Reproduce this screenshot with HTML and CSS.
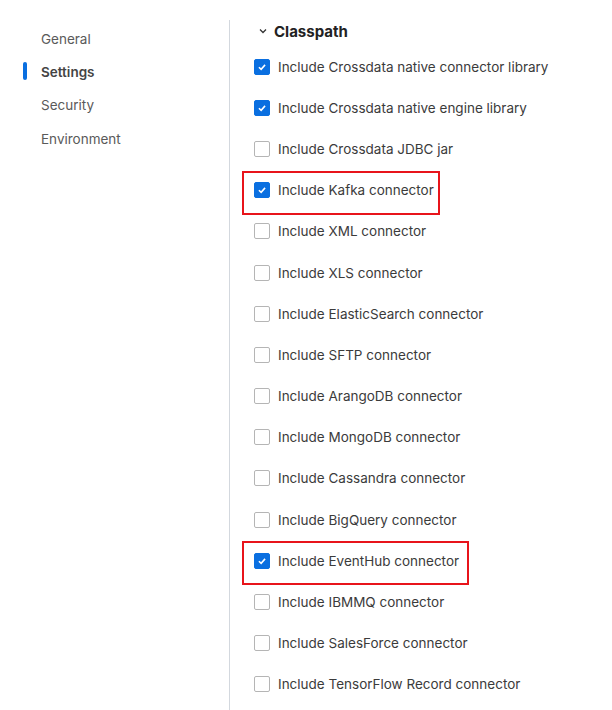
FILE: index.html
```html
<!DOCTYPE html>
<html lang="en">
<head>
<meta charset="utf-8">
<link rel="stylesheet" href="styles.css">
</head>
<body>
<div class="page">
  <nav class="sidenav">
    <div class="nav-item">General</div>
    <div class="nav-item active">Settings</div>
    <div class="nav-item">Security</div>
    <div class="nav-item">Environment</div>
  </nav>
  <main class="content">
    <div class="section-title">
      <svg class="chev" width="8" height="6" viewBox="0 0 8 6"><path d="M1 1.5 L4 4.5 L7 1.5" fill="none" stroke="#333" stroke-width="1.3"/></svg>
      <span>Classpath</span>
    </div>
    <ul class="opts">
      <li class="opt"><span class="cb on"><svg viewBox="0 0 16 16"><path d="M4.5 8.3 L7 10.6 L11.5 5.6" fill="none" stroke="#fff" stroke-width="1.8"/></svg></span>Include Crossdata native connector library</li>
      <li class="opt"><span class="cb on"><svg viewBox="0 0 16 16"><path d="M4.5 8.3 L7 10.6 L11.5 5.6" fill="none" stroke="#fff" stroke-width="1.8"/></svg></span>Include Crossdata native engine library</li>
      <li class="opt"><span class="cb"></span>Include Crossdata JDBC jar</li>
      <li class="opt"><span class="hl hl-kafka"></span><span class="cb on"><svg viewBox="0 0 16 16"><path d="M4.5 8.3 L7 10.6 L11.5 5.6" fill="none" stroke="#fff" stroke-width="1.8"/></svg></span>Include Kafka connector</li>
      <li class="opt"><span class="cb"></span>Include XML connector</li>
      <li class="opt"><span class="cb"></span>Include XLS connector</li>
      <li class="opt"><span class="cb"></span>Include ElasticSearch connector</li>
      <li class="opt"><span class="cb"></span>Include SFTP connector</li>
      <li class="opt"><span class="cb"></span>Include ArangoDB connector</li>
      <li class="opt"><span class="cb"></span>Include MongoDB connector</li>
      <li class="opt"><span class="cb"></span>Include Cassandra connector</li>
      <li class="opt"><span class="cb"></span>Include BigQuery connector</li>
      <li class="opt"><span class="hl hl-eventhub"></span><span class="cb on"><svg viewBox="0 0 16 16"><path d="M4.5 8.3 L7 10.6 L11.5 5.6" fill="none" stroke="#fff" stroke-width="1.8"/></svg></span>Include EventHub connector</li>
      <li class="opt"><span class="cb"></span>Include IBMMQ connector</li>
      <li class="opt"><span class="cb"></span>Include SalesForce connector</li>
      <li class="opt"><span class="cb"></span>Include TensorFlow Record connector</li>
    </ul>
  </main>
</div>
</body>
</html>
```
FILE: styles.css
```css
* { box-sizing: border-box; }
html, body { margin: 0; padding: 0; background: #fff; }
body {
  font-family: Inter, "Noto Sans", sans-serif;
  color: #3b3b3b;
  overflow: hidden;
  height: 710px;
}
.page {
  display: flex;
  padding-top: 20px;
  height: 710px;
}
.sidenav {
  width: 230px;
  border-right: 1px solid #d3d8de;
  padding-top: 10px;
  flex-shrink: 0;
}
.nav-item {
  position: relative;
  padding-left: 41px;
  height: 33.5px;
  line-height: 18px;
  font-size: 13.5px;
  color: #5a5a5a;
}
.nav-item.active {
  font-weight: 600;
  color: #444;
}
.nav-item.active::before {
  content: "";
  position: absolute;
  left: 23px;
  top: -1px;
  width: 4px;
  height: 18px;
  border-radius: 2px;
  background: #0a6fe0;
}
.nav-item:nth-child(2) { margin-top: -1px; }
.content {
  padding-left: 24px;
  flex: 1;
}
.section-title {
  display: flex;
  align-items: center;
  height: 22px;
  margin-bottom: 4px;
  font-size: 15px;
  font-weight: 700;
  color: #222;
}
.chev { margin-left: 5px; margin-right: 7px; }
.opts {
  list-style: none;
  margin: 0;
  padding: 0;
}
.opt {
  position: relative;
  display: flex;
  align-items: center;
  height: 41.2px;
  font-size: 13.5px;
  color: #3b3b3b;
}
.cb {
  width: 16px;
  height: 16px;
  border: 1px solid #b5b5b5;
  border-radius: 2px;
  margin-right: 8px;
  flex-shrink: 0;
  display: flex;
  background: #fff;
}
.cb.on {
  background: #0a6fe0;
  border-color: #0a6fe0;
}
.cb svg { width: 14px; height: 14px; }
.hl {
  position: absolute;
  left: -12px;
  top: 1px;
  height: 44px;
  border: 2px solid #e8141b;
  pointer-events: none;
}
.hl-kafka { width: 198px; }
.hl-eventhub { width: 227px; }
```
